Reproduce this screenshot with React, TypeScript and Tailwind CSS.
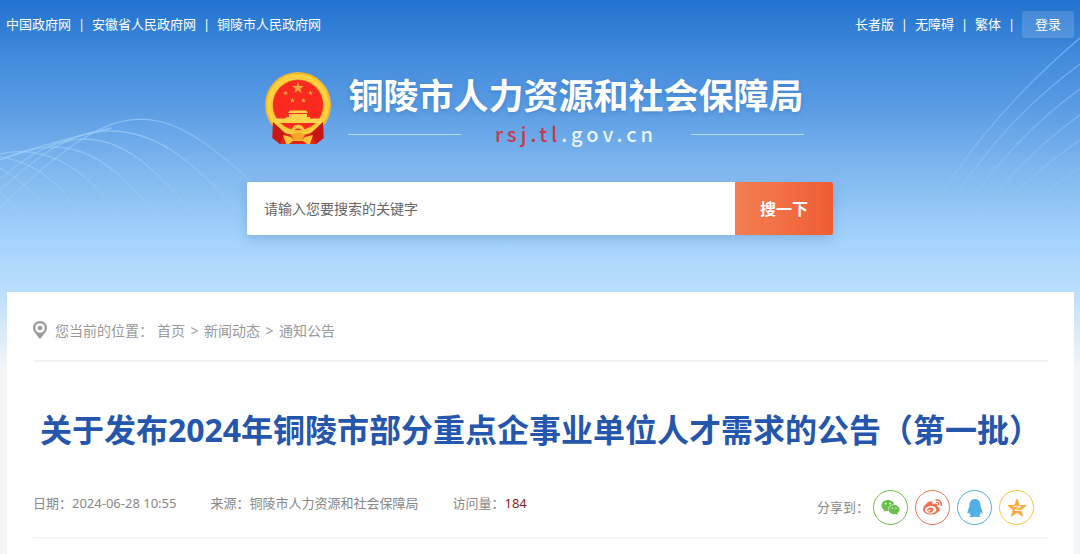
import { useState } from "react";
import { FaQq, FaWeibo, FaWeixin } from "react-icons/fa";

const governmentLinks = ["中国政府网", "安徽省人民政府网", "铜陵市人民政府网"];
const toolLinks = ["长者版", "无障碍", "繁体"];
const breadcrumbs = ["首页", "新闻动态", "通知公告"];

const starPath = "M0-10 2.4-3.1 9.5-3.1 3.8 1.2 5.9 8.1 0 4-5.9 8.1-3.8 1.2-9.5-3.1-2.4-3.1Z";

function Waves() {
    return (
        <>
            <svg className="absolute left-0 top-0" width="260" height="292" fill="none" stroke="url(#waveLeft)" strokeWidth="1.3" aria-hidden="true">
                <defs>
                    <linearGradient id="waveLeft" gradientUnits="userSpaceOnUse" x1="0" y1="115" x2="0" y2="235">
                        <stop offset="0" stopColor="#9dcffb" stopOpacity="0.7" />
                        <stop offset="1" stopColor="#b5dcff" stopOpacity="0" />
                    </linearGradient>
                </defs>
                <path d="M0 208C32 177 66 146 100 129C150 106 190 124 250 181" />
                <path d="M0 190C34 159 68 132 107 131C158 130 190 160 245 217" />
                <path d="M0 179C28 156 50 140 83 139C132 138 168 183 212 236" />
                <path d="M0 160C24 150 92 132 112 128" />
                <path d="M0 160C20 152 36 147 55 147C103 148 138 190 170 235" />
                <path d="M0 154C12 151 20 151 28 152C74 156 104 192 132 235" />
                <path d="M0 157C42 163 66 190 95 235" />
                <path d="M0 168C28 183 46 207 63 235" />
                <path d="M0 192C14 205 22 218 32 235" />
            </svg>
            <svg className="absolute right-0 top-0" width="180" height="292" fill="none" stroke="url(#waveRight)" strokeWidth="1.3" aria-hidden="true">
                <defs>
                    <linearGradient id="waveRight" gradientUnits="userSpaceOnUse" x1="0" y1="30" x2="0" y2="232">
                        <stop offset="0" stopColor="#7cb9f8" stopOpacity="0.85" />
                        <stop offset="1" stopColor="#b5dcff" stopOpacity="0" />
                    </linearGradient>
                </defs>
                <path d="M20 230C58 164 98 108 180 38" />
                <path d="M34 230C76 160 118 110 180 64" />
                <path d="M50 230C94 164 132 124 180 89" />
                <path d="M68 230C104 178 140 144 180 115" />
                <path d="M85 230C118 186 148 162 180 140" />
                <path d="M108 230C132 201 156 183 180 167" />
                <path d="M136 230C150 214 164 203 180 193" />
            </svg>
        </>
    );
}

function Emblem() {
    return (
        <svg width="66" height="73" viewBox="0 0 66 73" role="img" aria-label="国徽">
            <circle cx="33" cy="33" r="33" fill="#f6b928" />
            <circle cx="33" cy="33" r="31" fill="#ffd03f" />
            {/* Ribbon */}
            <path d="M8 50C14 60 22 63 33 63C44 63 52 60 58 50L58.500 66L51 72H15L7.500 66Z" fill="#e3241c" />
            <path d="M8 50L20 61L15 72L7.500 66ZM58 50L46 61L51 72L58.500 66Z" fill="#c91813" />
            <circle cx="33" cy="34" r="27" fill="#f9c53b" />
            <circle cx="33" cy="33" r="25.500" fill="#d9921c" />
            <circle cx="33" cy="33" r="25" fill="#fb2a1f" />
            <g fill="#eba53a">
                <path d={starPath} transform="translate(33 16) scale(.62)" />
                <path d={starPath} transform="translate(20.500 21) scale(.28)" />
                <path d={starPath} transform="translate(45.500 21) scale(.28)" />
                <path d={starPath} transform="translate(27.500 28.500) scale(.28)" />
                <path d={starPath} transform="translate(38.500 28.500) scale(.28)" />
            </g>
            {/* Gate tower */}
            <path d="M25 38.500H41L43 41H23ZM24 42H42V45H24ZM21 45H45V46.500H57L55 51H11L9 46.500H21Z" fill="#ffd34a" />
            {/* Gear and tassels */}
            <path d="M25 60L28 55C30 52 36 52 38 55L41 60L37 58C34 56 32 56 29 58Z" fill="#ffc93f" />
            <path d="M26 63C29 60 37 60 40 63L37 68H29Z" fill="#f6a52b" />
            <path d="M18 63L26 65L29 68H37L40 65L48 63L45 72H42L38 69H28L24 72H21Z" fill="#ffc33a" />
        </svg>
    );
}

function PinIcon() {
    return (
        <svg width="14" height="18" viewBox="0 0 14 18" aria-hidden="true">
            <path
                fillRule="evenodd"
                fill="#9b9b9b"
                d="M7 0C3.100 0 0 3.100 0 6.900C0 10.600 4.200 14 7 18C9.800 14 14 10.600 14 6.900C14 3.100 10.900 0 7 0ZM7 2.200A4.800 4.800 0 1 1 7 11.800A4.800 4.800 0 1 1 7 2.200Z"
            />
            <circle cx="7" cy="7" r="2.300" fill="#9b9b9b" />
        </svg>
    );
}

function QzoneIcon() {
    return (
        <svg width="18" height="18" viewBox="-10 -10.500 20 20" aria-hidden="true">
            <path d={starPath} fill="#fbab40" stroke="#fbab40" strokeWidth="1.500" strokeLinejoin="round" />
            <path d="M-4-2C-1-2.600 2-2.600 4-2L-2.500 2C0 2.600 2 2.600 4.500 2" fill="none" stroke="#fff" />
        </svg>
    );
}

const shareLinks = [
    { name: "微信", className: "border-[#6cbf4a] text-[#6cbf4a]", icon: <FaWeixin size={19} /> },
    { name: "微博", className: "border-[#f0714f] text-[#f0714f]", icon: <FaWeibo size={19} /> },
    { name: "QQ", className: "border-[#4fafe6] text-[#4fafe6]", icon: <FaQq size={18} /> },
    { name: "QQ空间", className: "border-[#fbc63c] text-[#fbc63c]", icon: <QzoneIcon /> },
];

function Header() {
    const [keyword, setKeyword] = useState("");

    return (
        <header>
            {/* Top links */}
            <div className="flex items-center justify-between px-[6px] pt-[11px] text-[13px] leading-[27px] text-white">
                <nav className="flex">
                    {governmentLinks.map((link, i) => (
                        <div key={link} className="flex">
                            {i > 0 && <span className="w-[21px] text-center">|</span>}
                            <a href="#">{link}</a>
                        </div>
                    ))}
                </nav>
                <div className="flex">
                    {toolLinks.map((link) => (
                        <div key={link} className="flex">
                            <a href="#">{link}</a>
                            <span className="w-[21px] text-center">|</span>
                        </div>
                    ))}
                    <button className="rounded-xs bg-white/15 px-[13px]">登录</button>
                </div>
            </div>

            {/* Site name */}
            <div className="mt-[34px] flex items-start justify-center gap-[17px] pr-[11px]">
                <Emblem />
                <div>
                    <div className="text-[35px] font-bold leading-[48px] text-white [text-shadow:0_2px_4px_rgba(30,90,170,0.3)]">
                        铜陵市人力资源和社会保障局
                    </div>
                    <div className="flex items-center justify-between">
                        <span className="h-px w-[113px] bg-[#b3dafa]" />
                        <span className="font-['Noto_Sans_CJK_SC',sans-serif] text-[20px] font-medium leading-[28px] tracking-[4px] text-[#eaf5ff]">
                            <span className="text-[#cf3548]">rsj.tl</span>.gov.cn
                        </span>
                        <span className="h-px w-[113px] bg-[#b3dafa]" />
                    </div>
                </div>
            </div>

            {/* Search */}
            <form
                className="mx-auto mt-[34px] flex h-[53px] w-full max-w-[586px] overflow-hidden rounded-xs shadow-[0_4px_12px_rgba(70,110,160,0.3)]"
                onSubmit={(e) => e.preventDefault()}
            >
                <input
                    type="text"
                    aria-label="搜索关键字"
                    placeholder="请输入您要搜索的关键字"
                    value={keyword}
                    onChange={(e) => setKeyword(e.target.value)}
                    className="min-w-0 flex-1 bg-white px-[17px] text-[14px] text-[#333333] outline-none placeholder:text-[#666666]"
                />
                <button className="w-[98px] bg-linear-to-r from-[#f47f52] to-[#ef5c34] text-[16px] font-bold text-white">
                    搜一下
                </button>
            </form>
        </header>
    );
}

function Article() {
    return (
        <main className="ml-[7px] mr-[6px] mt-[57px] min-h-[262px] bg-white px-[26px]">
            <nav className="flex h-[70px] items-center border-b-2 border-[#f2f2f2] pt-[8px] text-[14px] text-[#999999]">
                <PinIcon />
                <span className="ml-[8px] mr-[4px]">您当前的位置：</span>
                {breadcrumbs.map((crumb, i) => (
                    <div key={crumb} className="flex">
                        {i > 0 && <span className="w-[19px] text-center">&gt;</span>}
                        <a href="#">{crumb}</a>
                    </div>
                ))}
            </nav>

            <h1 className="mt-[44px] text-center text-[32px] font-bold leading-[48px] text-[#2456ae]">
                关于发布2024年铜陵市部分重点企事业单位人才需求的公告（第一批）
            </h1>

            <div className="mt-[36px] flex items-start justify-between border-b-2 border-[#f6f6f6] pb-[12px] text-[13px] text-[#888888]">
                <div className="flex gap-[34px] leading-[26px]">
                    <span>日期：2024-06-28 10:55</span>
                    <span>来源：铜陵市人力资源和社会保障局</span>
                    <span>
                        访问量：<span className="text-[#8b1a1a]">184</span>
                    </span>
                </div>
                <div className="flex items-center gap-[4px] pr-[14px]">
                    <span>分享到：</span>
                    <div className="flex gap-[7px]">
                        {shareLinks.map((link) => (
                            <a
                                key={link.name}
                                href="#"
                                aria-label={link.name}
                                className={`flex size-[35px] items-center justify-center rounded-full border ${link.className}`}
                            >
                                {link.icon}
                            </a>
                        ))}
                    </div>
                </div>
            </div>
        </main>
    );
}

function App() {
    return (
        <div className="relative min-h-screen bg-[#f5f6f7] bg-[linear-gradient(#2172d0_0px,#448cdc_60px,#5599e2_100px,#80b7ee_170px,#a4d3fd_240px,#badefc_290px,#f5f6f7_370px)] font-['Noto_Sans','Noto_Sans_CJK_SC',sans-serif]">
            <Waves />
            <div className="relative">
                <Header />
                <Article />
            </div>
        </div>
    );
}

export default App;
